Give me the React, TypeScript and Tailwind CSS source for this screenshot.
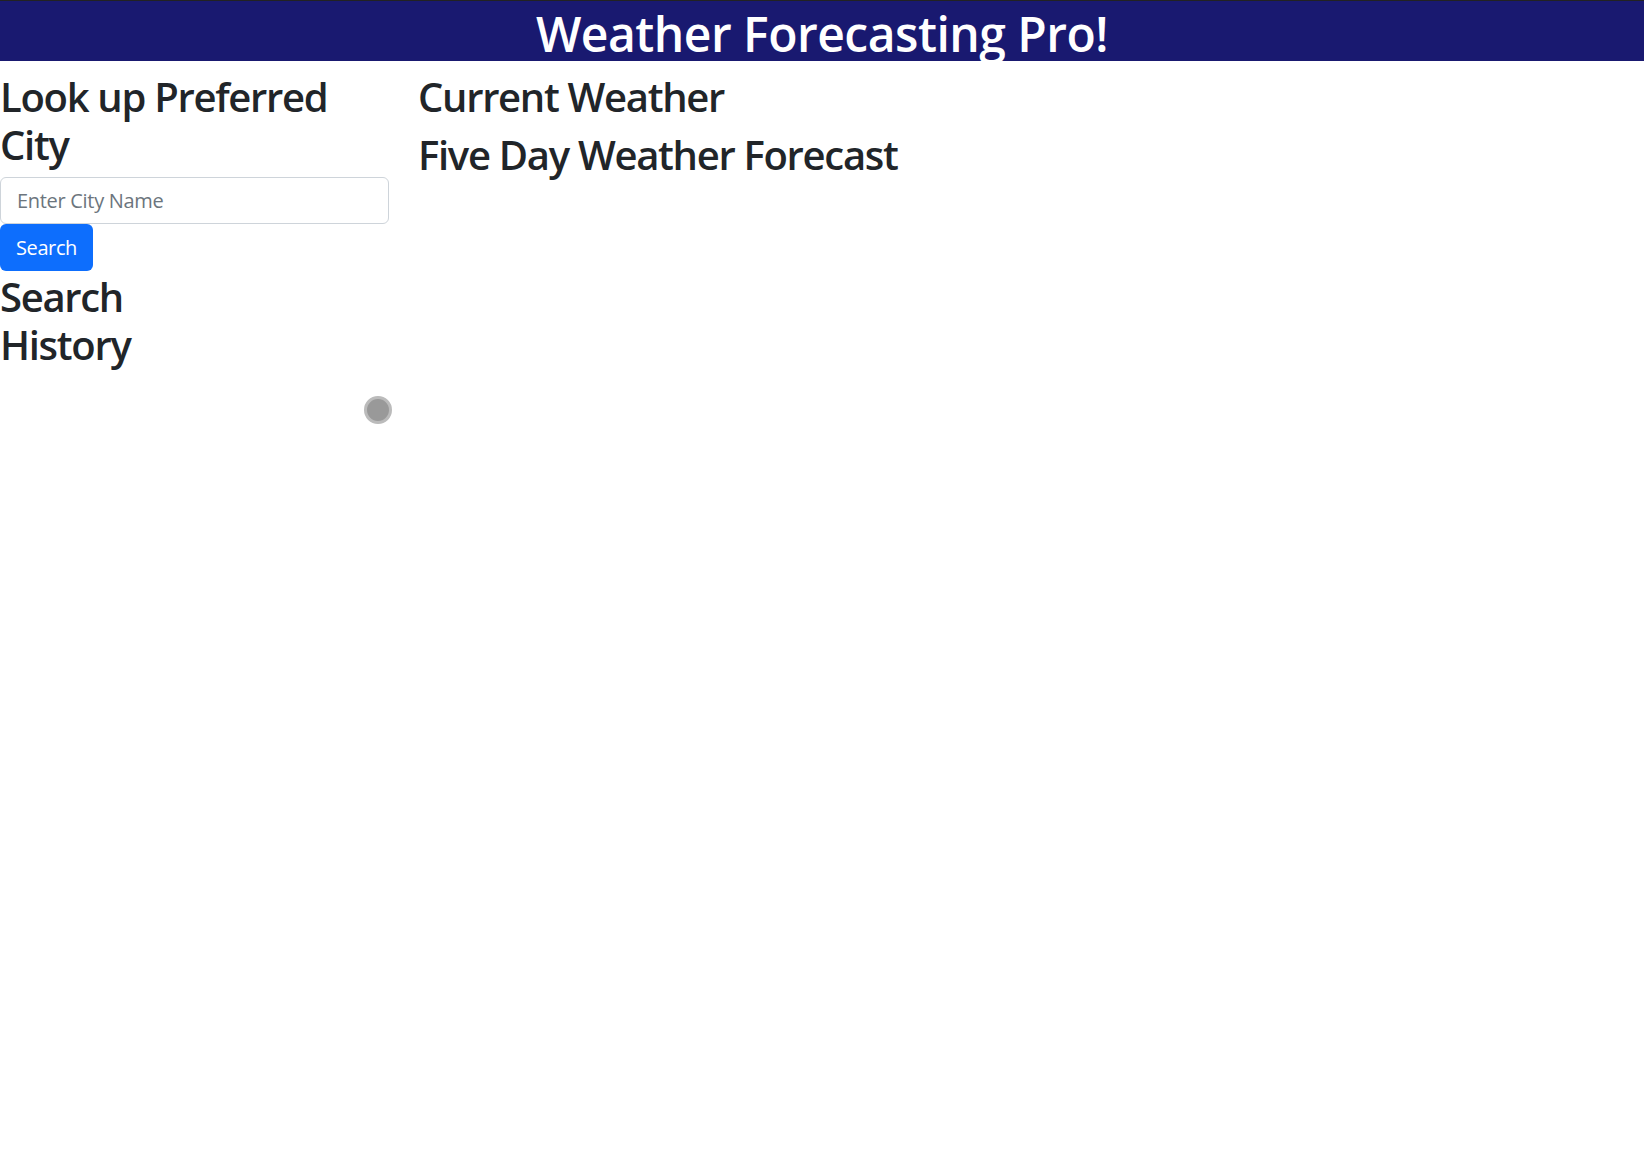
import React from "react";

const font = "font-['Open_Sans','Noto_Sans',sans-serif]";

export default function App() {
  return (
    <div className={`min-h-screen bg-white text-[#212529] ${font}`}>
      <header className="h-[61px] bg-[#191970] border-t border-[#222] flex justify-center">
        <h1 className="pt-[4px] text-[48px] leading-[58px] font-semibold text-white tracking-[-0.5px]">
          Weather Forecasting Pro!
        </h1>
      </header>

      <main className="flex pt-3">
        <aside className="relative w-[389px] shrink-0">
          <h1 className="text-[40px] leading-[48px] font-semibold tracking-[-1.3px] mb-2">
            Look up Preferred City
          </h1>
          <input
            type="text"
            placeholder="Enter City Name"
            className="block w-full h-[47px] px-4 text-[20px] tracking-[-0.3px] border border-[#ced4da] rounded-[6px] placeholder:text-[#6c757d] outline-none"
          />
          <button className="h-[47px] px-4 text-[20px] tracking-[-0.4px] text-white bg-[#0d6efd] rounded-[6px]">
            Search
          </button>
          <h1 className="mt-[2px] max-w-[160px] text-[40px] leading-[48px] font-semibold tracking-[-1.3px]">
            Search History
          </h1>
          <div className="absolute left-[364px] top-[323px] w-[28px] h-[28px] rounded-full bg-[#999] border-[3px] border-[#bbb]" />
        </aside>

        <section className="ml-[29px]">
          <h1 className="text-[40px] leading-[48px] font-semibold tracking-[-1.3px] mb-[10px]">
            Current Weather
          </h1>
          <h1 className="text-[40px] leading-[48px] font-semibold tracking-[-1.3px]">
            Five Day Weather Forecast
          </h1>
        </section>
      </main>
    </div>
  );
}
